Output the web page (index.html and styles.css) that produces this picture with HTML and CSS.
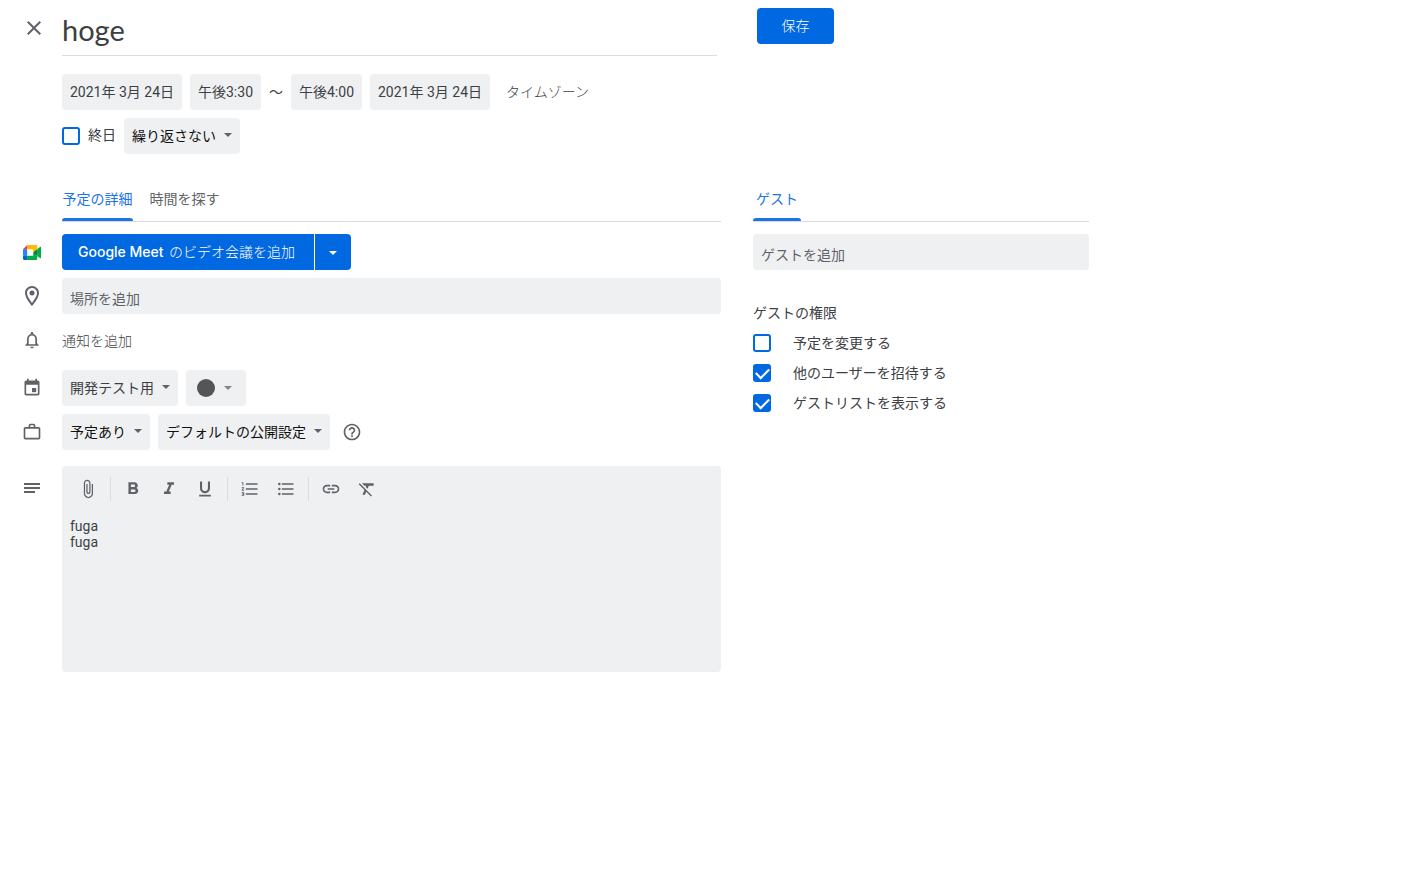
FILE: index.html
```html
<!DOCTYPE html>
<html lang="ja">
<head>
<meta charset="utf-8">
<meta name="viewport" content="width=device-width, initial-scale=1">
<title>hoge</title>
<link rel="stylesheet" href="styles.css">
</head>
<body>
<form class="page">
  <header class="header">
    <button type="button" class="icon-button close" aria-label="閉じる"><svg viewBox="0 0 24 24"><path d="M19 6.41 17.59 5 12 10.59 6.41 5 5 6.41 10.59 12 5 17.59 6.41 19 12 13.41 17.59 19 19 17.59 13.41 12z"/></svg></button>
    <input class="title" type="text" value="hoge" aria-label="タイトル">
    <button type="submit" class="button save">保存</button>
  </header>

  <section class="schedule">
    <div class="line">
      <input class="chip date" type="text" value="2021年 3月 24日" aria-label="開始日">
      <input class="chip time" type="text" value="午後3:30" aria-label="開始時間">
      <span class="until">～</span>
      <input class="chip time" type="text" value="午後4:00" aria-label="終了時間">
      <input class="chip date" type="text" value="2021年 3月 24日" aria-label="終了日">
      <button type="button" class="text-button timezone">タイムゾーン</button>
    </div>
    <div class="line">
      <label class="all-day"><input type="checkbox" class="check"><span>終日</span></label>
      <span class="select"><select class="strong" aria-label="繰り返し"><option>繰り返さない</option></select></span>
    </div>
  </section>

  <div class="columns">
    <main class="details">
      <div class="tabs" role="tablist">
        <button type="button" class="tab active" role="tab" aria-selected="true">予定の詳細</button>
        <button type="button" class="tab" role="tab" aria-selected="false">時間を探す</button>
      </div>

      <div class="rows">
        <div class="row">
          <svg class="meet" viewBox="0 0 87.5 72"><path fill="#00832d" d="M49.5 36l8.53 9.75 11.47 7.33 2-17.02-2-16.64-11.69 6.44z"/><path fill="#0066da" d="M0 51.5V66c0 3.315 2.685 6 6 6h14.5l3-10.96-3-9.54-9.95-3z"/><path fill="#e94235" d="M20.5 0L0 20.5l10.55 3 9.95-3 2.95-9.41z"/><path fill="#2684fc" d="M20.5 20.5H0v31h20.5z"/><path fill="#00ac47" d="M82.6 8.68L69.5 19.42v33.66l13.16 10.79c1.97 1.54 4.85.135 4.85-2.37V11c0-2.535-2.945-3.925-4.91-2.32zM49.5 36v15.5h-29V72h43c3.315 0 6-2.685 6-6V53.08z"/><path fill="#ffba00" d="M63.5 0h-43v20.5h29V36l20-16.57V6c0-3.315-2.685-6-6-6z"/></svg>
          <div class="split">
            <button type="button" class="button add-meet"><span class="brand">Google Meet</span> のビデオ会議を追加</button>
            <button type="button" class="button more" aria-label="会議の種類"></button>
          </div>
        </div>

        <div class="row">
          <svg class="icon pin" viewBox="0 0 24 24"><path d="M12 2C8.13 2 5 5.13 5 9c0 5.25 7 13 7 13s7-7.75 7-13c0-3.87-3.13-7-7-7zM7 9c0-2.76 2.24-5 5-5s5 2.24 5 5c0 2.88-2.88 7.19-5 9.88C9.92 16.21 7 11.85 7 9z"/><circle cx="12" cy="9" r="2.5"/></svg>
          <input class="field" type="text" placeholder="場所を追加" aria-label="場所">
        </div>

        <div class="row notify">
          <svg class="icon" viewBox="0 0 24 24"><path d="M12 22c1.1 0 2-.9 2-2h-4c0 1.1.9 2 2 2zm6-6v-5c0-3.07-1.63-5.64-4.5-6.32V4c0-.83-.67-1.5-1.5-1.5s-1.5.67-1.5 1.5v.68C7.64 5.36 6 7.92 6 11v5l-2 2v1h16v-1l-2-2zm-2 1H8v-6c0-2.48 1.51-4.5 4-4.5s4 2.02 4 4.5v6z"/></svg>
          <button type="button" class="text-button">通知を追加</button>
        </div>

        <div class="row">
          <svg class="icon" viewBox="0 0 24 24"><path d="M19 3h-1V1h-2v2H8V1H6v2H5c-1.100 0-2 .9-2 2v14c0 1.100.9 2 2 2h14c1.100 0 2-.9 2-2V5c0-1.100-.9-2-2-2zm0 16H5V8h14v11z"/><path d="M12 12h5v5h-5z"/></svg>
          <div class="line">
            <span class="select"><select aria-label="カレンダー"><option>開発テスト用</option></select></span>
            <button type="button" class="color" aria-label="予定の色"><span class="dot"></span></button>
          </div>
        </div>

        <div class="row">
          <svg class="icon" viewBox="0 0 24 24"><path d="M20 6h-4V4c0-1.11-.89-2-2-2h-4c-1.11 0-2 .89-2 2v2H4c-1.11 0-2 .89-2 2v11c0 1.11.89 2 2 2h16c1.11 0 2-.89 2-2V8c0-1.11-.89-2-2-2zM10 4h4v2h-4V4zm10 15H4V8h16v11z"/></svg>
          <div class="line">
            <span class="select"><select class="strong" aria-label="空き状況"><option>予定あり</option></select></span>
            <span class="select"><select class="strong" aria-label="公開設定"><option>デフォルトの公開設定</option></select></span>
            <button type="button" class="icon-button help" aria-label="ヘルプ"><svg viewBox="0 0 24 24"><path d="M11 18h2v-2h-2v2zm1-16C6.48 2 2 6.48 2 12s4.48 10 10 10 10-4.48 10-10S17.52 2 12 2zm0 18c-4.41 0-8-3.59-8-8s3.59-8 8-8 8 3.59 8 8-3.59 8-8 8zm0-14c-2.21 0-4 1.79-4 4h2c0-1.1.9-2 2-2s2 .9 2 2c0 2-3 1.75-3 5h2c0-2.25 3-2.5 3-5 0-2.21-1.79-4-4-4z"/></svg></button>
          </div>
        </div>

        <div class="row description">
          <svg class="icon" viewBox="0 0 20 20"><path d="M2 5h16v2H2zM2 9h16v2H2zM2 13h11v2H2z"/></svg>
          <div class="editor">
            <div class="toolbar" role="toolbar">
              <button type="button" class="tool" aria-label="添付ファイルを追加"><svg viewBox="0 0 24 24"><path d="M16.5 6v11.5c0 2.21-1.79 4-4 4s-4-1.79-4-4V5c0-1.38 1.12-2.5 2.5-2.5s2.5 1.12 2.5 2.5v10.5c0 .55-.45 1-1 1s-1-.45-1-1V6H10v9.500c0 1.38 1.12 2.500 2.500 2.500s2.500-1.120 2.500-2.500V5c0-2.210-1.790-4-4-4S7 2.790 7 5v12.500c0 3.040 2.460 5.500 5.500 5.500s5.500-2.460 5.500-5.500V6h-1.500z"/></svg></button>
              <span class="divider"></span>
              <button type="button" class="tool" aria-label="太字"><svg viewBox="0 0 24 24"><path d="M16.100 10.790c.970-.670 1.650-1.770 1.650-2.790 0-2.260-1.750-4-4-4H6.500v14h8.040c2.090 0 3.710-1.700 3.710-3.790 0-1.520-.860-2.820-2.150-3.420zM9.500 6.500H13c.83 0 1.500.67 1.500 1.500s-.67 1.500-1.500 1.500H9.500v-3zm4 9h-4v-3h4c.83 0 1.500.67 1.500 1.500s-.67 1.500-1.500 1.500z"/></svg></button>
              <button type="button" class="tool" aria-label="斜体"><svg viewBox="0 0 24 24"><path d="M10 4v3h2.210l-3.420 8H6v3h8v-3h-2.210l3.420-8H18V4z"/></svg></button>
              <button type="button" class="tool" aria-label="下線"><svg viewBox="0 0 24 24"><path d="M12 17c3.310 0 6-2.690 6-6V3h-2.500v8c0 1.930-1.570 3.500-3.500 3.500S8.500 12.930 8.500 11V3H6v8c0 3.310 2.690 6 6 6zm-7 2v2h14v-2H5z"/></svg></button>
              <span class="divider"></span>
              <button type="button" class="tool" aria-label="番号付きリスト"><svg viewBox="0 0 24 24"><path d="M2 17h2v.5H3v1h1v.5H2v1h3v-4H2v1zm1-9h1V4H2v1h1v3zm-1 3h1.800L2 13.100v.9h3v-1H3.200L5 10.900V10H2v1zm5-6v2h14V5H7zm0 14h14v-2H7v2zm0-6h14v-2H7v2z"/></svg></button>
              <button type="button" class="tool" aria-label="箇条書き"><svg viewBox="0 0 24 24"><path d="M7 5h14v2H7zM7 11h14v2H7zM7 17h14v2H7z"/><circle cx="4" cy="6" r="1.500"/><circle cx="4" cy="12" r="1.500"/><circle cx="4" cy="18" r="1.500"/></svg></button>
              <span class="divider"></span>
              <button type="button" class="tool" aria-label="リンクを挿入"><svg viewBox="0 0 24 24"><path d="M3.900 12c0-1.710 1.390-3.100 3.100-3.100h4V7H7c-2.760 0-5 2.240-5 5s2.240 5 5 5h4v-1.900H7c-1.710 0-3.100-1.390-3.100-3.100zM8 13h8v-2H8v2zm9-6h-4v1.900h4c1.710 0 3.100 1.390 3.100 3.100s-1.390 3.100-3.100 3.100h-4V17h4c2.760 0 5-2.240 5-5s-2.240-5-5-5z"/></svg></button>
              <button type="button" class="tool" aria-label="書式をクリア"><svg viewBox="0 0 24 24"><path d="M3.270 5L2 6.270l6.970 6.970L6.500 19h3l1.570-3.660L16.730 21 18 19.730 3.550 5.270 3.270 5zM6 5v.18L8.820 8h2.400l-.72 1.680 2.100 2.100L14.210 8H20V5H6z"/></svg></button>
            </div>
            <textarea class="body" aria-label="説明">fuga
fuga</textarea>
          </div>
        </div>
      </div>
    </main>

    <aside class="guests">
      <div class="tabs" role="tablist">
        <button type="button" class="tab guest-tab active" role="tab" aria-selected="true">ゲスト</button>
      </div>
      <input class="field" type="text" placeholder="ゲストを追加" aria-label="ゲスト">
      <fieldset class="permissions">
        <legend>ゲストの権限</legend>
        <label class="permission"><input type="checkbox" class="check">予定を変更する</label>
        <label class="permission"><input type="checkbox" class="check" checked>他のユーザーを招待する</label>
        <label class="permission"><input type="checkbox" class="check" checked>ゲストリストを表示する</label>
      </fieldset>
    </aside>
  </div>
</form>
</body>
</html>
```

FILE: styles.css
```css
* { box-sizing: border-box; }

body {
  margin: 0;
  background: #fff;
  color: #3c4043;
  font: 14px/20px Roboto, "Noto Sans CJK JP", sans-serif;
}

button, input, select, textarea {
  margin: 0;
  padding: 0;
  border: 0;
  border-radius: 0;
  background: none;
  color: inherit;
  font: inherit;
}

svg { display: block; fill: currentColor; }

.page { padding: 8px 20px 32px; }

/* Header */
.header { display: flex; align-items: flex-start; }

.icon-button {
  display: grid;
  place-items: center;
  flex: none;
  color: #5f6368;
}

.close { width: 28px; height: 40px; margin-right: 14px; }
.close svg { width: 24px; height: 24px; }

.title {
  flex: 0 1 655px;
  min-width: 0;
  height: 48px;
  padding-bottom: 4px;
  border-bottom: 1px solid #dadce0;
  font-family: Lato, "Noto Sans CJK JP", sans-serif;
  font-size: 29px;
  line-height: 36px;
}

.button {
  height: 36px;
  border-radius: 4px;
  background: #0068e0;
  color: #fff;
  font-weight: 300;
  white-space: nowrap;
}

.save { min-width: 77px; margin-left: 40px; padding: 0 24px 1px; }

/* Date and time */
.schedule {
  display: grid;
  gap: 8px;
  margin-top: 18px;
  padding-left: 42px;
}

.line { display: flex; flex-wrap: wrap; align-items: center; gap: 8px; }

.chip { height: 36px; padding: 0 8px 2px; border-radius: 4px; background: #eff0f2; }
.date { width: 120px; }
.time { width: 71px; }

.text-button { color: #3c4043; font-weight: 300; }
.timezone { margin-left: 8px; }
.until { width: 14px; }

.all-day { display: flex; align-items: center; gap: 8px; }
.all-day span { padding-bottom: 2px; }

.check {
  appearance: none;
  display: grid;
  place-items: center;
  flex: none;
  width: 18px;
  height: 18px;
  border: 2px solid #0068e0;
  border-radius: 3px;
}

.check:checked { background: #0068e0; }

.check:checked::before {
  content: "";
  width: 11px;
  height: 6px;
  margin-bottom: 3px;
  border: solid #fff;
  border-width: 0 0 2px 2px;
  transform: rotate(-45deg);
}

.select { position: relative; display: flex; }

.select select {
  appearance: none;
  height: 36px;
  padding: 0 24px 1px 8px;
  border-radius: 4px;
  background: #eff0f2;
}

.select .strong { color: #111; }

.select::after {
  content: "";
  position: absolute;
  top: 15px;
  right: 8px;
  border: 4px solid transparent;
  border-top-color: #5f6368;
  border-bottom-width: 0;
  pointer-events: none;
}

/* Columns */
.columns {
  display: grid;
  grid-template-columns: minmax(0, 701px) minmax(0, 336px);
  gap: 32px;
  margin-top: 24px;
}

.tabs {
  display: flex;
  gap: 16px;
  height: 44px;
  border-bottom: 1px solid #dadce0;
}

.details .tabs { margin-left: 42px; }

.tab {
  display: flex;
  flex-direction: column;
  justify-content: space-between;
  min-width: 71px;
  padding-top: 11px;
  color: #5f6368;
}

.tab::after {
  content: "";
  width: 100%;
  height: 3px;
  border-radius: 3px 3px 0 0;
}

.tab.active { color: #1a73e8; }
.tab.active::after { background: #1a73e8; }
.guest-tab { min-width: 48px; align-items: center; }

.rows { display: grid; gap: 8px; margin-top: 12px; }

.row {
  display: grid;
  grid-template-columns: 24px minmax(0, 1fr);
  gap: 18px;
  align-items: center;
}

.icon { width: 20px; height: 20px; margin-left: 2px; color: #5f6368; }
.pin { width: 24px; height: 24px; margin-left: 0; }
.meet { width: 18px; height: 15px; margin-left: 3px; }

.split { display: flex; gap: 1px; }
.add-meet { padding: 0 19px 0 16px; border-radius: 4px 0 0 4px; }
.brand { margin-right: 2px; font-family: Inter, sans-serif; font-weight: 500; }

.more {
  display: grid;
  place-items: center;
  width: 36px;
  border-radius: 0 4px 4px 0;
}

.more::before {
  content: "";
  margin-top: 2px;
  border: 4px solid transparent;
  border-top-color: #fff;
  border-bottom-width: 0;
}

.field {
  width: 100%;
  height: 36px;
  padding: 5px 8px 0;
  border-radius: 4px;
  background: #eff0f2;
}

.field::placeholder { color: #5f6368; opacity: 1; }

.notify { height: 40px; padding-bottom: 4px; }
.notify .text-button { justify-self: start; padding-top: 2px; }

.color {
  display: flex;
  align-items: center;
  gap: 9px;
  height: 36px;
  padding: 0 14px 0 11px;
  border-radius: 4px;
  background: #eff0f2;
}

.dot { width: 18px; height: 18px; border-radius: 50%; background: #555; }

.color::after {
  content: "";
  border: 4px solid transparent;
  border-top-color: #80868b;
  border-bottom-width: 0;
}

.help { width: 28px; height: 36px; }
.help svg { width: 20px; height: 20px; }

.description { align-items: start; margin-top: 8px; }
.description .icon { margin-top: 12px; }

.editor { border-radius: 4px; background: #eff0f2; }

.toolbar {
  display: flex;
  flex-wrap: wrap;
  align-items: center;
  padding: 5px 8px;
  color: #5f6368;
}

.tool { display: grid; place-items: center; width: 36px; height: 36px; }
.tool svg { width: 20px; height: 20px; }
.divider { width: 1px; height: 24px; margin: 0 4px; background: #dadce0; }

.body {
  display: block;
  width: 100%;
  height: 160px;
  padding: 6px 8px;
  resize: none;
  line-height: 16px;
}

/* Guests */
.guests .field { margin-top: 12px; }

.permissions {
  display: grid;
  gap: 10px;
  margin: 33px 0 0;
  padding: 0;
  border: 0;
}

.permissions legend { padding: 0; margin-bottom: 10px; }
.permission { display: flex; align-items: center; gap: 22px; }
```
